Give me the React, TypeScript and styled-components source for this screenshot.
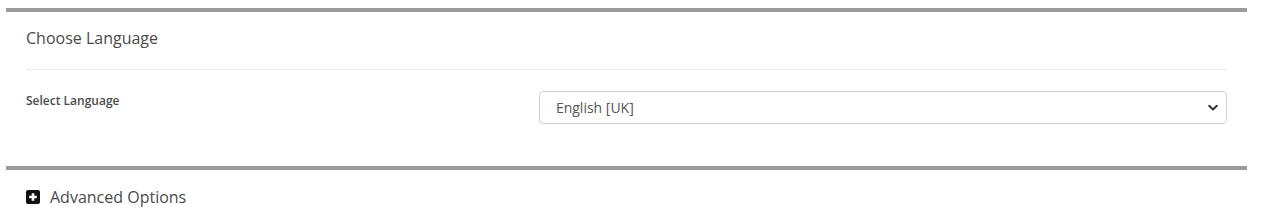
import React from 'react';
import styled, { createGlobalStyle } from 'styled-components';

const GlobalStyle = createGlobalStyle`
  html, body {
    margin: 0;
    padding: 0;
    background: #ffffff;
  }

  body {
    font-family: 'Open Sans', 'Liberation Sans', sans-serif;
    color: #444;
  }
`;

const Page = styled.div`
  padding: 8px 15px 0 6px;
`;

const Panel = styled.section`
  border-top: 4px solid #9b9b9b;
  margin-bottom: 22px;
`;

const PanelHeader = styled.header<{ $divided?: boolean }>`
  display: flex;
  align-items: center;
  gap: 10px;
  margin: 0 20px;
  padding: ${(p) => (p.$divided ? '16px 0 21px' : '17px 0 17px')};
  border-bottom: ${(p) => (p.$divided ? '1px solid #ececec' : 'none')};
`;

const PanelTitle = styled.h3`
  margin: 0;
  font-size: 16px;
  font-weight: 400;
  line-height: 20px;
  color: #4a4a4a;
`;

const PanelBody = styled.div`
  padding: 21px 20px 20px;
`;

const FormRow = styled.div`
  display: flex;
  margin: 0 -15px;
`;

const LabelCol = styled.div`
  flex: 0 0 41.6667%;
  padding: 0 15px;
  box-sizing: border-box;
`;

const FieldCol = styled.div`
  flex: 0 0 58.3333%;
  padding: 0 15px;
  box-sizing: border-box;
`;

const FieldLabel = styled.label`
  display: block;
  padding-top: 1px;
  font-size: 12px;
  font-weight: 600;
  line-height: 17px;
  color: #4a4a4a;
`;

const SelectWrap = styled.div`
  position: relative;
`;

const Select = styled.select`
  appearance: none;
  width: 100%;
  height: 33px;
  box-sizing: border-box;
  padding: 0 36px 0 16px;
  border: 1px solid #cfcfcf;
  border-radius: 4px;
  background: #fff;
  font-family: 'Open Sans', 'Liberation Sans', sans-serif;
  font-size: 14px;
  color: #555;
  outline: none;
`;

const Chevron = styled.svg`
  position: absolute;
  right: 9px;
  top: 50%;
  width: 10px;
  height: 7px;
  transform: translateY(-50%);
  pointer-events: none;
`;

const PlusBox = styled.svg`
  width: 14px;
  height: 14px;
  flex: none;
`;

const App = () => {
  return (
    <>
      <GlobalStyle />
      <Page>
        <Panel>
          <PanelHeader $divided>
            <PanelTitle>Choose Language</PanelTitle>
          </PanelHeader>
          <PanelBody>
            <FormRow>
              <LabelCol>
                <FieldLabel htmlFor="language">Select Language</FieldLabel>
              </LabelCol>
              <FieldCol>
                <SelectWrap>
                  <Select id="language" defaultValue="en-GB">
                    <option value="en-GB">English [UK]</option>
                    <option value="en-US">English [US]</option>
                  </Select>
                  <Chevron viewBox="0 0 10 7">
                    <path d="M1.2 1.3 L5 5 L8.8 1.3" fill="none" stroke="#333" strokeWidth="2" strokeLinecap="round" strokeLinejoin="round" />
                  </Chevron>
                </SelectWrap>
              </FieldCol>
            </FormRow>
          </PanelBody>
        </Panel>
        <Panel>
          <PanelHeader>
            <PlusBox viewBox="0 0 14 14">
              <rect x="0" y="0" width="14" height="14" rx="2" fill="#111" />
              <path d="M7 3.2 V10.8 M3.2 7 H10.8" stroke="#fff" strokeWidth="2.6" />
            </PlusBox>
            <PanelTitle>Advanced Options</PanelTitle>
          </PanelHeader>
        </Panel>
      </Page>
    </>
  );
};

export default App;
